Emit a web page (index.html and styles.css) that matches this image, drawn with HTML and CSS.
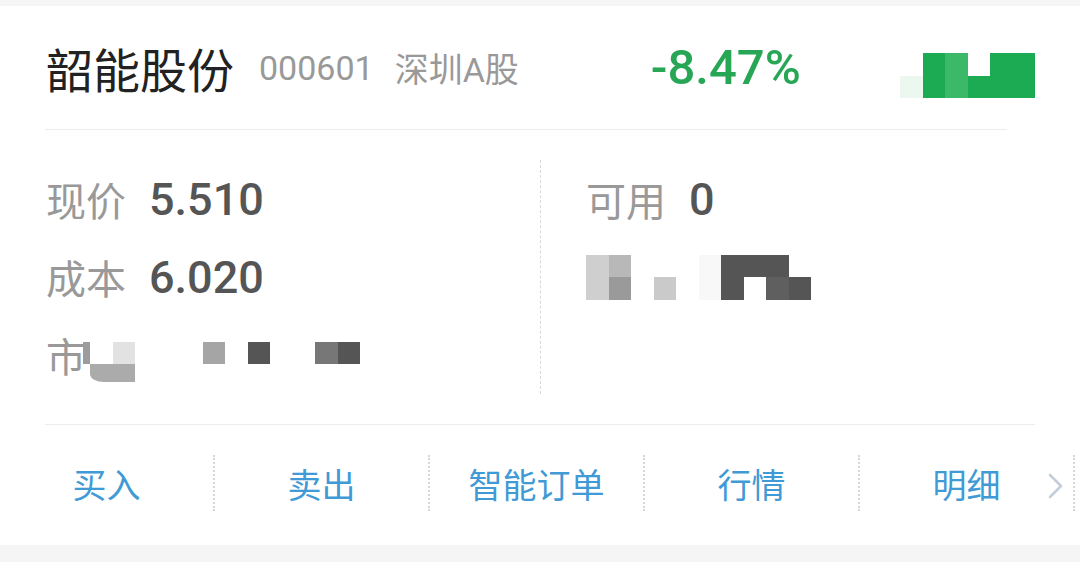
FILE: index.html
```html
<!DOCTYPE html>
<html lang="zh-CN">
<head>
  <meta charset="UTF-8">
  <title>韶能股份 持仓</title>
  <meta name="viewport" content="width=device-width, initial-scale=1.0">
  <link rel="stylesheet" href="styles.css">
</head>
<body>

  <div class="card">
    <div class="head">
      <span class="name">韶能股份</span>
      <span class="code">000601</span>
      <span class="market">深圳A股</span>
      <span class="change">-8.47%</span>
      <div class="mosaic cols6 head-mosaic">
        <i></i><i class="g1"></i><i class="g2"></i><i></i><i class="g1"></i><i class="g1"></i>
        <i class="g0"></i><i class="g1"></i><i class="g2"></i><i class="g1"></i><i class="g1"></i><i class="g1"></i>
      </div>
    </div>
    <div class="rule rule-head"></div>

    <div class="info">
      <div class="col">
        <div class="row"><span class="label">现价</span><span class="value">5.510</span></div>
        <div class="row"><span class="label">成本</span><span class="value">6.020</span></div>
        <div class="row">
          <span class="label">市</span>
          <div class="mosaic cols12 mv-mosaic">
            <i class="p-9c"></i><i></i><i class="p-e2"></i><i></i><i></i><i></i><i class="p-a5"></i><i></i><i class="p-55"></i><i></i><i></i><i class="p-77"></i><i class="p-55"></i>
            <i></i><i class="p-ab w2 round"></i>
          </div>
        </div>
      </div>
      <div class="col col-right">
        <div class="row"><span class="label">可用</span><span class="value">0</span></div>
        <div class="row">
          <div class="mosaic cols10">
            <i class="p-cf"></i><i class="p-b8"></i><i></i><i></i><i></i><i class="p-f8"></i><i class="p-55"></i><i class="p-55"></i><i class="p-55"></i><i></i>
            <i class="p-cf"></i><i class="p-9a"></i><i></i><i class="p-ca"></i><i></i><i class="p-f8"></i><i class="p-55"></i><i></i><i class="p-5f"></i><i class="p-55"></i>
          </div>
        </div>
        <div class="row"></div>
      </div>
    </div>
    <div class="rule rule-info"></div>

    <div class="actions">
      <div class="action">买入</div>
      <div class="action">卖出</div>
      <div class="action">智能订单</div>
      <div class="action">行情</div>
      <div class="action">明细</div>
      <svg class="more" width="16" height="26" viewBox="0 0 16 26">
        <polyline points="2,2 13,13 2,24" fill="none" stroke="#c4ced9" stroke-width="2.6" stroke-linecap="round" stroke-linejoin="round"/>
      </svg>
    </div>
  </div>

</body>
</html>
```

FILE: styles.css
```css
body {
  margin: 0;
  background: #f5f5f5;
  font-family: "Noto Sans CJK SC", sans-serif;
  overflow: hidden;
}
.card {
  margin-top: 6px;
  background: #fff;
}
.head {
  display: flex;
  align-items: center;
  height: 123px;
  padding: 0 45px 0 46px;
  white-space: nowrap;
}
.name {
  font-size: 47px;
  color: #222;
}
.code, .market, .change, .value {
  font-family: Roboto, "Noto Sans CJK SC", sans-serif;
}
.code {
  margin-left: 25px;
  font-size: 34px;
  color: #999;
}
.market {
  margin-left: 21px;
  font-size: 34px;
  color: #999;
}
.change {
  margin-left: 132px;
  font-size: 49px;
  font-weight: 500;
  color: #27a755;
}
.head-mosaic {
  margin-left: auto;
  margin-top: 16px;
}
.rule {
  height: 1px;
  background: #ececec;
}
.rule-head {
  margin: 0 73px 0 45px;
}
.rule-info {
  margin: 0 45px;
}
.info {
  display: flex;
  padding: 30px 0 30px;
}
.col {
  width: 494px;
  padding-left: 46px;
  height: 234px;
}
.col-right {
  width: auto;
  flex: 1;
  padding-left: 45px;
  border-left: 1px dashed #d9d9d9;
}
.row {
  display: flex;
  align-items: center;
  height: 78px;
}
.label {
  font-size: 40px;
  color: #999;
}
.value {
  margin-left: 23px;
  font-size: 45px;
  font-weight: 500;
  color: #555;
}

/* blurred figures */
.mosaic {
  display: grid;
  grid-auto-rows: 22.5px;
}
.cols6 { grid-template-columns: repeat(6, 22.5px); }
.cols10 { grid-template-columns: repeat(10, 22.5px); }
.cols12 { grid-template-columns: 7px repeat(12, 22.5px); }
.mv-mosaic {
  margin-left: -3px;
  margin-top: 18px;
}
.w2 { grid-column: span 2; }
.round { border-bottom-left-radius: 14px 8px; height: 18px; }
.g0 { background: #ebf7ef; }
.g1 { background: #1cab52; }
.g2 { background: #3cb869; }
.p-f8 { background: #f8f8f8; }
.p-e2 { background: #e2e2e2; }
.p-cf { background: #cfcfcf; }
.p-ca { background: #cacaca; }
.p-b8 { background: #b8b8b8; }
.p-ab { background: #ababab; }
.p-a5 { background: #a5a5a5; }
.p-9c { background: #9c9c9c; }
.p-9a { background: #9a9a9a; }
.p-77 { background: #777; }
.p-5f { background: #5f5f5f; }
.p-55 { background: #555; }

.actions {
  position: relative;
  display: flex;
  padding: 30px 0 34px;
}
.action {
  box-sizing: border-box;
  width: 215px;
  height: 56px;
  border-right: 2px dotted #d6d6d6;
  display: flex;
  align-items: center;
  justify-content: center;
  font-size: 34px;
  color: #3f9ad5;
}
.more {
  position: absolute;
  right: 16px;
  top: 48px;
}
```
